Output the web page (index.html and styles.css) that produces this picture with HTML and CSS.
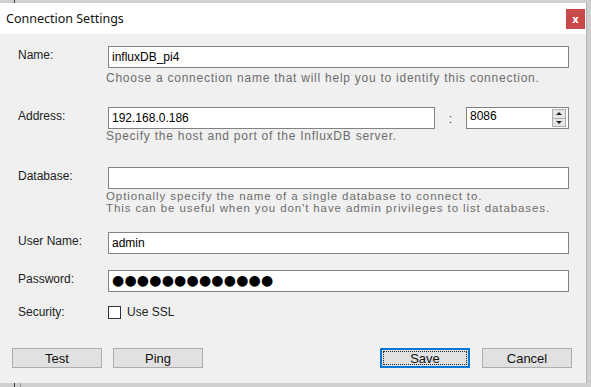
FILE: index.html
```html
<!DOCTYPE html>
<html lang="en">
<head>
    <meta charset="UTF-8">
    <title>Connection Settings</title>
    <link rel="stylesheet" href="styles.css">
</head>
<body>
    <div class="dialog">
        <div class="titlebar">
            <span class="title">Connection Settings</span>
            <span class="close">x</span>
        </div>

        <div class="form">
            <div class="row row-name">
                <label class="lbl">Name:</label>
                <div class="field">
                    <div class="input">influxDB_pi4</div>
                    <div class="hint">Choose a connection name that will help you to identify this connection.</div>
                </div>
            </div>

            <div class="row row-address">
                <label class="lbl">Address:</label>
                <div class="field">
                    <div class="addr-line">
                        <div class="input host">192.168.0.186</div>
                        <span class="colon">:</span>
                        <div class="input port">
                            8086
                            <span class="spin">
                                <span class="spin-up"></span>
                                <span class="spin-down"></span>
                            </span>
                        </div>
                    </div>
                    <div class="hint">Specify the host and port of the InfluxDB server.</div>
                </div>
            </div>

            <div class="row row-db">
                <label class="lbl">Database:</label>
                <div class="field">
                    <div class="input"></div>
                    <div class="hint tight">Optionally specify the name of a single database to connect to.<br>This can be useful when you don't have admin privileges to list databases.</div>
                </div>
            </div>

            <div class="row row-user">
                <label class="lbl">User Name:</label>
                <div class="field">
                    <div class="input">admin</div>
                </div>
            </div>

            <div class="row row-pass">
                <label class="lbl">Password:</label>
                <div class="field">
                    <div class="input dots">●●●●●●●●●●●●●</div>
                </div>
            </div>

            <div class="row row-sec">
                <label class="lbl">Security:</label>
                <div class="field check">
                    <span class="box"></span>
                    <span>Use SSL</span>
                </div>
            </div>
        </div>

        <div class="buttons">
            <button class="btn">Test</button>
            <button class="btn">Ping</button>
            <span class="spacer"></span>
            <button class="btn default"><span class="focus">Save</span></button>
            <button class="btn">Cancel</button>
        </div>
        <span class="grip"></span>
    </div>
</body>
</html>
```

FILE: styles.css
```css
body {
    margin: 0;
    padding-top: 3px;
    height: 384px;
    background:
        linear-gradient(#3a3a3a, #3a3a3a) 14px 0 / 1px 3px no-repeat,
        linear-gradient(#3a3a3a, #3a3a3a) 14px 383px / 1px 4px no-repeat,
        linear-gradient(#9a9a9a, #9a9a9a) 20px 383px / 1px 4px no-repeat,
        #cfcfcf;
    font-family: "Liberation Sans", Arial, sans-serif;
    font-size: 12px;
    color: #000;
    overflow: hidden;
}
.dialog {
    position: relative;
    width: 587px;
    height: 380px;
    background: #f0f0f0;
    border-right: 1px solid #b5b5b5;
    box-sizing: border-box;
}
.titlebar {
    height: 31px;
    background: #fff;
    display: flex;
    align-items: center;
    padding-left: 6px;
}
.title {
    font-family: "Noto Sans", sans-serif;
    font-size: 12.5px;
    color: #111;
    flex: 1;
}
.close {
    width: 19px;
    height: 20px;
    margin-right: 1px;
    margin-top: 1px;
    background: #c9494b;
    color: #fff;
    font-family: "DejaVu Sans", sans-serif;
    font-weight: bold;
    font-size: 10px;
    display: flex;
    align-items: center;
    justify-content: center;
}
.form {
    padding: 0 17px 0 18px;
}
.row {
    display: flex;
}
.lbl {
    width: 90px;
    padding-top: 2px;
    color: #222;
}
.field {
    flex: 1;
}
.input {
    height: 22px;
    box-sizing: border-box;
    border: 1px solid #828282;
    background: #fff;
    padding: 3px 0 0 3px;
    font-size: 12px;
}
.hint {
    color: #6d6d6d;
    margin-left: -2px;
    margin-top: 3px;
    letter-spacing: 0.75px;
    white-space: nowrap;
}
.hint.tight {
    font-size: 11.5px;
    letter-spacing: 0.9px;
    line-height: 12px;
    margin-top: 1px;
}
.row-name { margin-top: 12px; }
.row-address { margin-top: 22px; }
.row-address .hint { margin-top: 0; }
.row-db { margin-top: 24px; }
.row-user { margin-top: 18px; }
.row-pass { margin-top: 16px; }
.row-sec { margin-top: 12px; }
.row-sec .lbl { padding-top: 1px; }
.addr-line {
    display: flex;
    align-items: center;
    height: 22px;
}
.host {
    width: 327px;
}
.colon {
    width: 31px;
    text-align: center;
    color: #333;
    padding-top: 2px;
}
.port {
    position: relative;
    flex: 1;
    padding-top: 1px;
}
.spin {
    position: absolute;
    right: 2px;
    top: 1px;
    width: 14px;
    height: 18px;
    display: flex;
    flex-direction: column;
    border: 1px solid #adadad;
    box-sizing: border-box;
    background: #e5e5e5;
}
.spin-up, .spin-down {
    flex: 1;
    display: flex;
    align-items: center;
    justify-content: center;
}
.spin-up { border-bottom: 1px solid #adadad; }
.spin-up::after {
    content: "";
    border: 3px solid transparent;
    border-bottom: 3px solid #222;
    border-top: 0;
}
.spin-down::after {
    content: "";
    border: 3px solid transparent;
    border-top: 3px solid #222;
    border-bottom: 0;
}
.dots {
    font-family: "DejaVu Sans", sans-serif;
    font-size: 14px;
    letter-spacing: 0.2px;
    padding-top: 1px;
    padding-left: 3px;
}
.check {
    display: flex;
    align-items: center;
    gap: 6px;
    height: 16px;
    color: #222;
}
.box {
    width: 13px;
    height: 13px;
    box-sizing: border-box;
    border: 1px solid #333;
    background: #fff;
}
.buttons {
    display: flex;
    align-items: center;
    padding: 0 14px 0 12px;
    margin-top: 28px;
    gap: 11px;
}
.spacer {
    flex: 1;
}
.btn {
    width: 90px;
    height: 20px;
    box-sizing: border-box;
    border: 1px solid #adadad;
    background: #e1e1e1;
    font-family: "Liberation Sans", Arial, sans-serif;
    font-size: 13px;
    color: #111;
    padding: 0;
    margin: 0;
}
.btn.default {
    border: 2px solid #0078d7;
    padding: 1px;
    margin-right: 1px;
}
.focus {
    display: block;
    height: 100%;
    border: 1px dotted #222;
    box-sizing: border-box;
    line-height: 13px;
}
.grip {
    position: absolute;
    right: 2px;
    bottom: 2px;
    width: 7px;
    height: 7px;
    background: radial-gradient(circle, #a0a0a0 45%, transparent 50%) 0 0 / 2px 2px;
    clip-path: polygon(100% 0, 100% 100%, 0 100%);
}
```
